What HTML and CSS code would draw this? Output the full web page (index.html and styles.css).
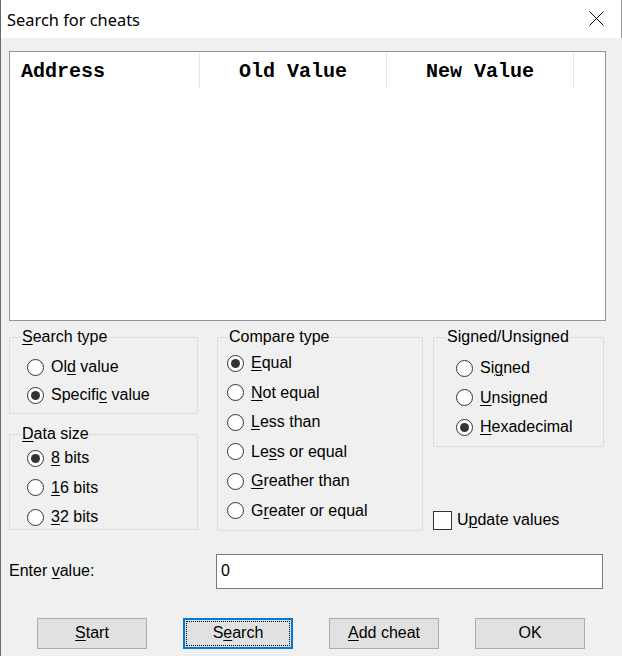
FILE: index.html
```html
<!DOCTYPE html>
<html>
<head>
<meta charset="utf-8">
<title>Search for cheats</title>
<link rel="stylesheet" href="styles.css">
</head>
<body>
<div class="window">
  <div class="titlebar">
    <span class="title">Search for cheats</span>
    <svg class="close" width="15" height="15" viewBox="0 0 15 15"><path d="M0.5 0.5L14.5 14.5M14.5 0.5L0.5 14.5" stroke="#000" stroke-width="1" fill="none"/></svg>
  </div>
  <div class="client">
    <div class="list">
      <div class="list-head">
        <div class="col col-addr">Address</div>
        <div class="col col-old">Old Value</div>
        <div class="col col-new">New Value</div>
      </div>
    </div>

    <div class="options">
      <div class="col1">
        <fieldset class="group g-search">
          <legend class="lg-search"><u>S</u>earch type</legend>
          <div class="items">
            <label class="radio"><span class="circle"></span><span>Ol<u>d</u> value</span></label>
            <label class="radio"><span class="circle on"></span><span>Specifi<u>c</u> value</span></label>
          </div>
        </fieldset>
        <fieldset class="group g-size">
          <legend class="lg-size"><u>D</u>ata size</legend>
          <div class="items">
            <label class="radio"><span class="circle on"></span><span><u>8</u> bits</span></label>
            <label class="radio"><span class="circle"></span><span><u>1</u>6 bits</span></label>
            <label class="radio"><span class="circle"></span><span><u>3</u>2 bits</span></label>
          </div>
        </fieldset>
      </div>

      <div class="col2">
        <fieldset class="group g-compare">
          <legend class="lg-compare">Compare type</legend>
          <div class="items">
            <label class="radio"><span class="circle on"></span><span><u>E</u>qual</span></label>
            <label class="radio"><span class="circle"></span><span><u>N</u>ot equal</span></label>
            <label class="radio"><span class="circle"></span><span><u>L</u>ess than</span></label>
            <label class="radio"><span class="circle"></span><span>Le<u>s</u>s or equal</span></label>
            <label class="radio"><span class="circle"></span><span><u>G</u>reather than</span></label>
            <label class="radio"><span class="circle"></span><span>G<u>r</u>eater or equal</span></label>
          </div>
        </fieldset>
      </div>

      <div class="col3">
        <fieldset class="group g-signed">
          <legend class="lg-signed">Signed/Unsigned</legend>
          <div class="items">
            <label class="radio"><span class="circle"></span><span>Si<u>g</u>ned</span></label>
            <label class="radio"><span class="circle"></span><span><u>U</u>nsigned</span></label>
            <label class="radio"><span class="circle on"></span><span><u>H</u>exadecimal</span></label>
          </div>
        </fieldset>
        <label class="check"><span class="box"></span><span>U<u>p</u>date values</span></label>
      </div>
    </div>

    <div class="value-row">
      <span class="value-label">Enter <u>v</u>alue:</span>
      <div class="value-input">0</div>
    </div>

    <div class="buttons">
      <div class="btn"><span><u>S</u>tart</span></div>
      <div class="btn btn-focus"><span>S<u>e</u>arch</span></div>
      <div class="btn"><span><u>A</u>dd cheat</span></div>
      <div class="btn"><span>OK</span></div>
    </div>
  </div>
</div>
</body>
</html>
```

FILE: styles.css
```css
* { box-sizing: border-box; }
html, body { margin: 0; padding: 0; }
body {
  width: 622px;
  height: 656px;
  overflow: hidden;
  background: #f0f0f0;
  font-family: "Liberation Sans", Arial, sans-serif;
  font-size: 16px;
  color: #000;
}
u { text-decoration: underline; text-decoration-thickness: 1px; text-underline-offset: 2px; }

.window {
  width: 622px;
  height: 656px;
  border-left: 1px solid #6b6b6b;
  display: flex;
  flex-direction: column;
}
.titlebar {
  height: 38px;
  flex: none;
  background: #fff;
  border-right: 1px solid #9a9a9a;
  display: flex;
  align-items: center;
  justify-content: space-between;
  padding: 0 17px 0 6px;
}
.title {
  font-family: "Noto Sans", sans-serif;
  font-size: 16.4px;
  line-height: 20px;
  margin-top: 2px;
}
.close { display: block; margin-top: -1px; }

.client { flex: 1; padding: 13px 0 0 8px; }

.list {
  width: 597px;
  height: 270px;
  border: 1px solid #8f959c;
  background: #fff;
  padding-top: 1px;
}
.list-head {
  display: flex;
  height: 36px;
  font-family: "Liberation Mono", monospace;
  font-weight: bold;
  font-size: 20px;
}
.col {
  display: flex;
  align-items: center;
  border-right: 1px solid #e5e5e5;
}
.col-addr { width: 190px; padding-left: 11px; }
.col-old, .col-new { width: 187px; justify-content: center; }

.options { display: flex; align-items: stretch; margin-top: 7px; }
.col1 { width: 189px; display: flex; flex-direction: column; }
.col2 { width: 206px; margin-left: 19px; display: flex; flex-direction: column; }
.col3 { width: 171px; margin-left: 10px; display: flex; flex-direction: column; }

fieldset.group {
  margin: 0;
  padding: 0;
  min-width: 0;
  border: 1px solid #dcdcdc;
}
.group legend { padding: 0 1px; line-height: 18px; }
.lg-search, .lg-size { margin-left: 11px; }
.lg-compare { margin-left: 10px; }
.lg-signed { margin-left: 12px; }

.items { display: flex; flex-direction: column; }
.g-search .items { padding: 12px 0 9px 17px; gap: 10px; }
fieldset.g-size { margin-top: 11px; }
.g-size .items { padding: 6px 0 3px 17px; gap: 11.5px; }
fieldset.g-compare { flex: 1; }
.g-compare .items { padding: 8px 0 10px 9px; gap: 11.6px; }
.g-signed .items { padding: 13px 0 10px 22px; gap: 11.5px; }

.radio { display: flex; align-items: center; height: 18px; white-space: nowrap; }
.circle {
  width: 17px;
  height: 17px;
  flex: none;
  border: 1px solid #333;
  border-radius: 50%;
  background: #fff;
  margin-right: 7px;
  display: flex;
  align-items: center;
  justify-content: center;
}
.circle.on::after {
  content: "";
  width: 9px;
  height: 9px;
  border-radius: 50%;
  background: #333;
}

.check { display: flex; align-items: center; margin-top: auto; margin-bottom: 1px; height: 19px; }
.box {
  width: 19px;
  height: 19px;
  border: 1px solid #333;
  background: #fff;
  margin-right: 5px;
  flex: none;
}

.value-row { display: flex; align-items: center; margin-top: 23px; }
.value-label { width: 207px; }
.value-input {
  width: 387px;
  height: 35px;
  border: 1px solid #7a7a7a;
  background: #fff;
  padding-left: 4px;
  display: flex;
  align-items: center;
}

.buttons { display: flex; gap: 36px; margin-top: 29px; padding-left: 28px; }
.btn {
  width: 110px;
  height: 31px;
  background: #e1e1e1;
  border: 1px solid #adadad;
  display: flex;
  align-items: center;
  justify-content: center;
}
.btn-focus {
  border: 2px solid #0078d7;
  outline: 1px dotted #000;
  outline-offset: -4px;
}
```
